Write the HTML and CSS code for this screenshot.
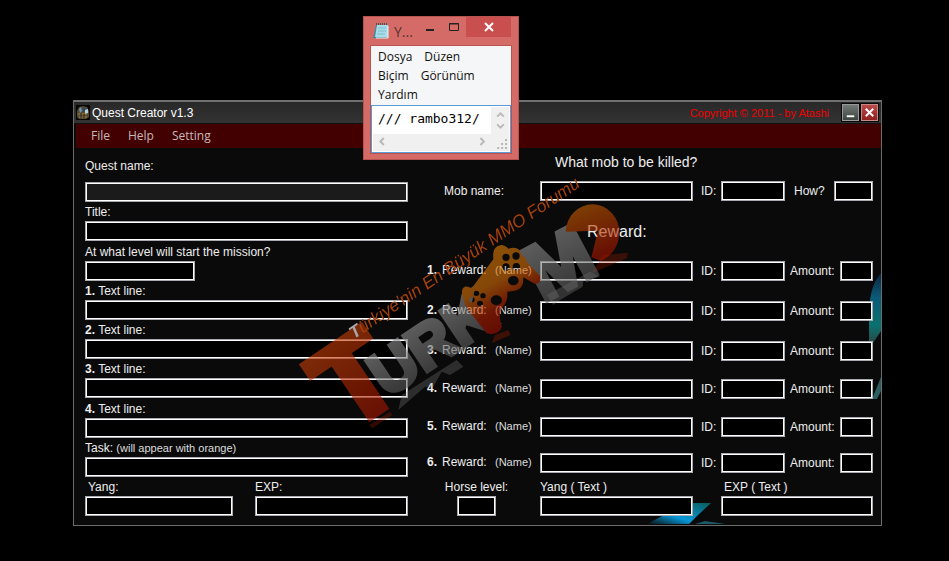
FILE: index.html
```html
<!DOCTYPE html>
<html lang="en">
<head>
<meta charset="utf-8">
<title>Quest Creator v1.3</title>
<link rel="stylesheet" href="styles.css">
</head>
<body>
<main class="app">
  <header class="titlebar">
    <svg class="app-icon" viewBox="0 0 14 15" aria-hidden="true">
      <rect width="14" height="15" fill="#060504"/>
      <path d="M1 6L3 2L7 1L11 2L13 6V12L10 14H3L1 12Z" fill="#544b32"/>
      <path d="M3 4L5 2L6 6L4 8Z" fill="#7192aa"/>
      <path d="M7 3L9 2L9 6L7 7Z" fill="#1d4a78"/>
      <path d="M9 5L12 4L12 8L9 9Z" fill="#b9d2da"/>
      <path d="M2 9H11M3 12H11" stroke="#a3873f"/>
      <path d="M5 8V13M8 9V13" stroke="#282018"/>
    </svg>
    <h1 class="app-title">Quest Creator v1.3</h1>
    <span class="copyright">Copyright © 2011 - by Atashi</span>
    <button class="win-btn" type="button" aria-label="Minimize"><svg viewBox="0 0 16 16"><path d="M4 12H12" stroke="#fff" stroke-width="2"/></svg></button>
    <button class="win-btn win-close" type="button" aria-label="Close"><svg viewBox="0 0 16 16"><path d="M4 4L12 12M12 4L4 12" stroke="#fff" stroke-width="2"/></svg></button>
  </header>
  <nav class="menubar">
    <button type="button">File</button>
    <button type="button">Help</button>
    <button type="button">Setting</button>
  </nav>
  <svg class="glow glow-side" viewBox="0 0 12 130" aria-hidden="true">
    <defs><linearGradient id="side" x1="0" y1="0" x2="0" y2="1"><stop offset="0" stop-color="#0a2440"/><stop offset=".35" stop-color="#0c5a78"/><stop offset=".75" stop-color="#0b716f"/><stop offset="1" stop-color="#2c4747"/></linearGradient></defs>
    <path d="M12 2Q1 14 0 40V70L4 72L12 60Z" fill="url(#side)"/>
    <path d="M12 106L3 128H8L12 120Z" fill="#2b5d60"/>
  </svg>
  <svg class="glow glow-base" viewBox="0 0 100 24" aria-hidden="true">
    <defs><linearGradient id="base" x1="0" y1="1" x2="1" y2="0"><stop offset="0" stop-color="#0a0a0a"/><stop offset=".4" stop-color="#0798d8"/><stop offset="1" stop-color="#0b5b5b"/></linearGradient></defs>
    <path d="M2 23L42 2H66L52 15L44 23Z" fill="url(#base)"/>
    <path d="M50 23L60 20L80 23Z" fill="#1d5a68"/>
  </svg>
  <form class="quest">
    <section class="col-left">
      <div class="field field-first"><label for="qn">Quest name:</label><input id="qn" class="dim" type="text"></div>
      <div class="field"><label for="ti">Title:</label><input id="ti" type="text"></div>
      <div class="field"><label for="lv">At what level will start the mission?</label><input id="lv" class="short" type="text"></div>
      <div class="field"><label for="t1"><b>1.</b> Text line:</label><input id="t1" type="text"></div>
      <div class="field"><label for="t2"><b>2.</b> Text line:</label><input id="t2" type="text"></div>
      <div class="field"><label for="t3"><b>3.</b> Text line:</label><input id="t3" type="text"></div>
      <div class="field"><label for="t4"><b>4.</b> Text line:</label><input id="t4" type="text"></div>
      <div class="field"><label for="ta">Task: <small>(will appear with orange)</small></label><input id="ta" type="text"></div>
      <div class="pair">
        <div class="field inset"><label for="ya">Yang:</label><input id="ya" type="text"></div>
        <div class="field"><label for="ex">EXP:</label><input id="ex" type="text"></div>
      </div>
    </section>
    <section class="col-right">
      <h2 class="mob-heading">What mob to be killed?</h2>
      <div class="row">
        <label class="mob-label" for="mn">Mob name:</label><input id="mn" type="text">
        <label class="id" for="mi">ID:</label><input id="mi" type="text">
        <div class="count"><label for="mh">How?</label><input id="mh" class="how" type="text"></div>
      </div>
      <h2 class="reward-heading">Reward:</h2>
      <div class="rewards">
        <div class="row"><label class="name" for="n1"><b>1.</b><span>Reward:</span><small>(Name)</small></label><input id="n1" type="text"><label class="id" for="i1">ID:</label><input id="i1" type="text"><div class="count"><label for="a1">Amount:</label><input id="a1" type="text"></div></div>
        <div class="row"><label class="name" for="n2"><b>2.</b><span>Reward:</span><small>(Name)</small></label><input id="n2" type="text"><label class="id" for="i2">ID:</label><input id="i2" type="text"><div class="count"><label for="a2">Amount:</label><input id="a2" type="text"></div></div>
        <div class="row"><label class="name" for="n3"><b>3.</b><span>Reward:</span><small>(Name)</small></label><input id="n3" type="text"><label class="id" for="i3">ID:</label><input id="i3" type="text"><div class="count"><label for="a3">Amount:</label><input id="a3" type="text"></div></div>
        <div class="row"><label class="name" for="n4"><b>4.</b><span>Reward:</span><small>(Name)</small></label><input id="n4" type="text"><label class="id" for="i4">ID:</label><input id="i4" type="text"><div class="count"><label for="a4">Amount:</label><input id="a4" type="text"></div></div>
        <div class="row"><label class="name" for="n5"><b>5.</b><span>Reward:</span><small>(Name)</small></label><input id="n5" type="text"><label class="id" for="i5">ID:</label><input id="i5" type="text"><div class="count"><label for="a5">Amount:</label><input id="a5" type="text"></div></div>
        <div class="row"><label class="name" for="n6"><b>6.</b><span>Reward:</span><small>(Name)</small></label><input id="n6" type="text"><label class="id" for="i6">ID:</label><input id="i6" type="text"><div class="count"><label for="a6">Amount:</label><input id="a6" type="text"></div></div>
      </div>
      <div class="row row-last">
        <div class="field horse"><label for="hl">Horse level:</label><input id="hl" type="text"></div>
        <div class="field"><label for="yt">Yang ( Text )</label><input id="yt" type="text"></div>
        <div class="field inset exp"><label for="et">EXP ( Text )</label><input id="et" type="text"></div>
      </div>
    </section>
  </form>
</main>

<svg class="watermark" viewBox="0 0 1020 810" aria-hidden="true">
  <defs>
    <linearGradient id="red" x1="0" y1="0" x2="0" y2="1"><stop offset="0" stop-color="#d04a08"/><stop offset="1" stop-color="#a00c00"/></linearGradient>
    <linearGradient id="grey" x1="0" y1="0" x2="0" y2="1"><stop offset="0" stop-color="#a0a0a0"/><stop offset="1" stop-color="#505050"/></linearGradient>
    <linearGradient id="pad" x1="0" y1="0" x2=".5" y2="1"><stop offset="0" stop-color="#e88a00"/><stop offset=".5" stop-color="#d87008"/><stop offset=".75" stop-color="#b02000"/><stop offset="1" stop-color="#a00c00"/></linearGradient>
    <linearGradient id="disc" x1="0" y1="0" x2=".4" y2="1"><stop offset="0" stop-color="#cf6c00"/><stop offset="1" stop-color="#a81400"/></linearGradient>
  </defs>
  <g opacity=".28">
    <path d="M325 720L335 675L500 570L520 590L480 615L455 605L430 650L405 650Z" fill="#888"/>
    <path d="M605 520L615 495L655 480L662 495Z" fill="#c02000"/>
    <path d="M770 375L900 305L930 320L880 330L878 350L810 390L790 405Z" fill="#999"/>
    <path d="M905 310L940 255L1015 248L1010 265Z" fill="#b02000"/>
    <path d="M238 765L300 725L307 735L246 775Z" fill="#b02000"/>
  </g>
  <g opacity=".6">
    <text class="mark mark-red" font-size="350" text-anchor="middle" transform="translate(262 728) rotate(-34)" fill="url(#red)">T</text>
    <text class="mark mark-grey" font-size="184" transform="translate(292 684) rotate(-34)" fill="url(#grey)">URK</text>
    <text class="mark mark-grey" font-size="240" text-anchor="middle" transform="translate(846 352) rotate(-28)" fill="url(#grey)">M</text>
    <path fill-rule="evenodd" fill="url(#pad)" d="M515 365Q520 340 545 355L610 268Q605 228 635 225Q650 228 655 236Q690 226 694 255Q708 262 712 278L750 318Q755 340 735 342L700 322Q702 360 670 363L652 365Q655 398 634 415Q624 440 636 470Q625 498 590 490L555 445Q520 410 515 365ZM637 262a11 11 0 1 0 22 0a11 11 0 1 0-22 0M667 258a11 11 0 1 0 22 0a11 11 0 1 0-22 0M637 291a11 11 0 1 0 22 0a11 11 0 1 0-22 0M668 290a11 11 0 1 0 22 0a11 11 0 1 0-22 0M654 332a16 14 0 1 0 32 0a16 14 0 1 0-32 0M602 391a17 15 0 1 0 34 0a17 15 0 1 0-34 0M550 370a9 8 0 1 0 18 0a9 8 0 1 0-18 0M571 377a8 8 0 1 0 16 0a8 8 0 1 0-16 0M538 389a8 8 0 1 0 16 0a8 8 0 1 0-16 0M561 400a9 8 0 1 0 18 0a9 8 0 1 0-18 0"/>
    <path d="M827 185A80 84 0 0 1 988 190Q985 250 932 272L904 262L924 182Z" fill="url(#disc)"/>
  </g>
  <text class="tagline" font-size="52" transform="translate(192 508) rotate(-34)"><tspan class="tagline-first">T</tspan>ürkiye'nin En Büyük MMO Forumu</text>
</svg>

<section class="notepad">
  <header class="np-title">
    <svg class="np-icon" viewBox="0 0 16 16" aria-hidden="true">
      <path d="M3 2H15L13 15H0Z" fill="#3e8b9c"/><path d="M4 2H15V14H2Z" fill="#a8dce8"/><path d="M5 5H13M5 8H13M4 11H12" stroke="#7ebdcc"/><path d="M3 1H15" stroke="#4b5055" stroke-width="2" stroke-dasharray="1 1"/><path d="M15 3V15H3" fill="none" stroke="#e8f6fa"/>
    </svg>
    <span class="np-name">Y...</span>
    <button type="button" aria-label="Minimize"><svg viewBox="0 0 12 12"><path d="M2 9H10" stroke="#222" stroke-width="2"/></svg></button>
    <button type="button" aria-label="Maximize"><svg viewBox="0 0 12 12"><path d="M1.500 2.500H10.500V9.500H1.500ZM1 3H11" fill="none" stroke="#222"/></svg></button>
    <button class="np-close" type="button" aria-label="Close"><svg viewBox="0 0 12 12"><path d="M2 2L10 10M10 2L2 10" stroke="#fff" stroke-width="2"/></svg></button>
  </header>
  <div class="np-body">
    <nav class="np-menu">
      <button type="button">Dosya</button><button type="button">Düzen</button><button type="button">Biçim</button><button type="button">Görünüm</button><button type="button">Yardım</button>
    </nav>
    <div class="np-editor">
      <input class="np-text" type="text" aria-label="Text" value="/// rambo312/">
      <svg class="np-vbar" viewBox="0 0 18 28" aria-hidden="true"><path d="M6 10L9.500 6.500L13 10M6 18L9.500 21.500L13 18" fill="none" stroke="#b9b9b9" stroke-width="2"/></svg>
      <svg class="np-hbar" viewBox="0 0 138 17" aria-hidden="true"><path d="M11 4L7.500 7.500L11 11M109 4L112.500 7.500L109 11" fill="none" stroke="#b9b9b9" stroke-width="2"/><path d="M134 5h2v2h-2zM134 9h2v2h-2zM134 13h2v2h-2zM130 9h2v2h-2zM130 13h2v2h-2zM126 13h2v2h-2z" fill="#b5b5b5"/></svg>
    </div>
  </div>
</section>
</body>
</html>
```
FILE: styles.css
```css
* { box-sizing: border-box; }
body {
  position: relative;
  margin: 0;
  padding: 100px 67px 35px 73px;
  background: #000;
  color: #eee;
  font: 12px/18px "Liberation Sans", Arial, sans-serif;
}
button {
  padding: 0;
  border: 0;
  background: none;
  color: inherit;
  font: inherit;
}
svg { display: block; }
h1, h2 { margin: 0; font-weight: 400; }

.app {
  position: relative;
  border: 1px solid #6c6c6c;
  border-top: 2px solid #707072;
  background: #0a0a0a;
}
.titlebar {
  display: flex;
  align-items: center;
  height: 22px;
  padding: 0 3px 0 2px;
  background: linear-gradient(#282828, #333);
  border-bottom: 1px solid #111;
}
.app-icon { width: 14px; height: 15px; margin-right: 2px; }
.app-title { font-size: 12px; color: #fff; }
.copyright { margin: 0 11px 0 auto; color: #f00000; font-size: 11px; }
.win-btn {
  width: 17px;
  height: 17px;
  margin-left: 2px;
  border: 1px solid #999;
  outline: 1px solid #080808;
  background: linear-gradient(#747a76, #3d4540);
}
.win-close { border-color: #c98888; background: linear-gradient(#b94b4b, #8f2020); }

.menubar {
  display: flex;
  gap: 18px;
  height: 24px;
  margin-left: 2px;
  padding-left: 15px;
  background: #430000;
  color: #c4baba;
  font: 12px/24px "Open Sans", sans-serif;
}

.glow { position: absolute; }
.glow-side { right: 0; bottom: 124px; width: 12px; height: 130px; }
.glow-base { right: 136px; bottom: 0; width: 100px; height: 24px; }

.quest {
  position: relative;
  display: grid;
  grid-template-columns: 323fr 446fr;
  column-gap: 19px;
  padding: 5px 8px 9px 11px;
}
input {
  display: block;
  width: 100%;
  min-width: 0;
  height: 20px;
  padding: 0 4px;
  border: 1px solid #a9a9b0;
  border-radius: 0;
  outline: 0;
  box-shadow: inset 0 0 0 1px #fff;
  background: #000;
  color: #fff;
  font: inherit;
}
label { display: block; white-space: nowrap; }
small { font-size: 11px; color: #ddd; }

.col-left {
  display: flex;
  flex-direction: column;
  justify-content: space-between;
  padding-top: 4px;
}
.field-first label { margin-bottom: 7px; }
.dim { background: #1b1b1b; }
.short { width: 34%; }
.inset label { padding-left: 3px; }
.pair {
  display: grid;
  grid-template-columns: 148fr 153fr;
  column-gap: 22px;
}

.row {
  display: grid;
  grid-template-columns: 113fr 153fr 28fr 64fr 88fr;
  line-height: 20px;
}
.mob-heading {
  margin-bottom: 10px;
  padding-left: 128px;
  font-size: 14px;
  line-height: 18px;
}
.reward-heading {
  margin: 20px 0 18px;
  padding-left: 160px;
  font-size: 16px;
  line-height: 22px;
}
.rewards {
  display: grid;
  grid-template-rows: 40px 40px 38px 38px 36px 20px;
}
.mob-label { padding-left: 17px; }
.name { display: flex; line-height: 18px; }
.name b { width: 15px; }
.name span { width: 53px; }
.id { padding-left: 8px; }
.count {
  display: flex;
  justify-content: space-between;
  padding-left: 5px;
}
.count input { width: 33px; }
.count .how { width: 39px; }
.count label:has(+ .how) { padding-left: 4px; }
.row-last { margin-top: 5px; line-height: 18px; }
.horse { padding-right: 14px; text-align: center; }
.horse input { width: 39px; margin: 0 auto; }
.exp { grid-column: 4 / 6; }

.watermark {
  position: absolute;
  left: 290px;
  top: 170px;
  width: 340px;
  height: 270px;
  overflow: visible;
  pointer-events: none;
}
.mark { font-family: "Liberation Sans", Arial, sans-serif; font-weight: 700; }
.mark-red { stroke: url(#red); stroke-width: 22; }
.mark-grey { stroke: url(#grey); stroke-width: 14; }
.tagline { font-family: "Liberation Sans", Arial, sans-serif; font-style: italic; fill: #a8400c; }
.tagline-first { fill: #a8a8a8; font-weight: 700; }

.notepad {
  position: absolute;
  left: 363px;
  top: 16px;
  width: 156px;
  padding: 0 7px 6px;
  border: 1px solid #b85450;
  background: #d56b66;
  color: #111;
}
.np-title {
  display: flex;
  align-items: flex-start;
  height: 29px;
}
.np-icon { width: 16px; height: 16px; margin: 6px 5px 0 2px; }
.np-name {
  width: 24px;
  padding-top: 6px;
  color: #573030;
  font: 14px/18px "Open Sans", sans-serif;
}
.np-title button {
  display: flex;
  flex: 1;
  align-items: center;
  justify-content: center;
  height: 20px;
}
.np-title button svg { width: 12px; height: 12px; }
.np-title .np-close { flex: 0 0 45px; background: #c94f4f; }
.np-body { outline: 1px solid #b85450; background: #f5f6f7; }
.np-menu {
  display: flex;
  flex-wrap: wrap;
  column-gap: 12px;
  padding: 1px 20px 1px 7px;
  font: 12px/19px "Open Sans", sans-serif;
}
.np-editor {
  display: grid;
  grid-template-columns: 1fr 18px;
  border: 1px solid #5b9bd8;
  padding: 1px;
  background: #fff;
}
.np-text {
  height: 27px;
  padding: 0 0 4px 5px;
  border: 0;
  box-shadow: none;
  background: #fff;
  color: #000;
  font: 13px/22px "DejaVu Sans Mono", monospace;
}
.np-vbar { width: 18px; height: 27px; background: #f0f0f0; }
.np-hbar { grid-column: 1 / 3; width: 100%; height: 17px; background: #f0f0f0; }
```
